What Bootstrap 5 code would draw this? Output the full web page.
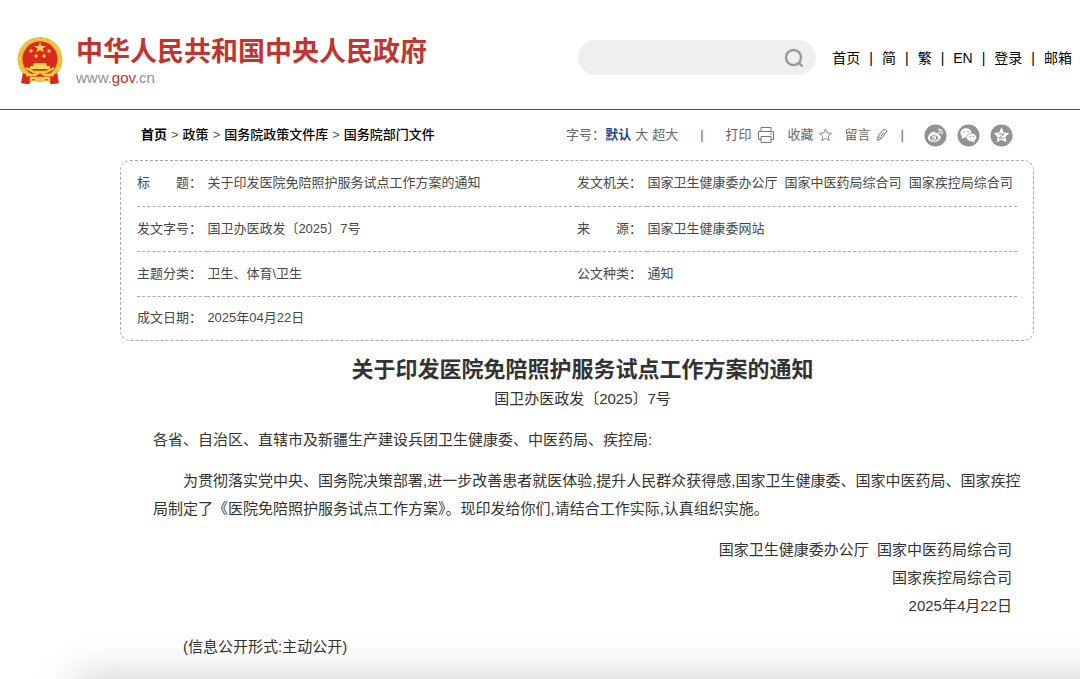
<!DOCTYPE html>
<html lang="zh-CN">
<head>
<meta charset="utf-8">
<meta name="viewport" content="width=device-width, initial-scale=1">
<title>关于印发医院免陪照护服务试点工作方案的通知</title>
<link href="https://cdn.jsdelivr.net/npm/bootstrap@5.3.0/dist/css/bootstrap.min.css" rel="stylesheet">
<style>
body{font-family:"Liberation Sans","Noto Sans CJK SC",sans-serif;font-size:13px;line-height:20px;color:#484848;background:#fff;overflow-x:hidden}
a{color:inherit;text-decoration:none}
.site-head{height:110px;padding:6px 8px 0 16px;border-bottom:1px solid #43508c}
.site-brand{padding-top:6px;gap:12px}
.site-name{font-size:27px;line-height:34px;font-weight:700;color:#c03530}
.site-url{font-size:15px;line-height:17px;color:#909090}
.site-url span{color:#c4302c}
.search-box{width:238px;height:35px;background:#efefef;padding:0 12px 0 16px}
.search-box input{background:transparent;border:0;outline:0;min-width:0}
.search-box button,.tool-btn{border:0;background:none;padding:0;color:inherit}
.top-links{font-size:14px;color:#000;gap:9px}
.page-body{padding:0 46px 0 120px}
.crumb-row{height:50px;padding:0 21px}
.crumbs{color:#000;gap:4px;font-weight:500}
.crumbs span{color:#555;font-weight:400}
.tools{color:#666}
.font-sizes{gap:4px;margin-right:22px}
.font-sizes .chosen{color:#134a97;font-weight:700;margin-left:-4px}
.tool-btn{display:flex;align-items:center;gap:5px}
.actions{margin:0 13px 0 22px;gap:13px}
.shares{margin-left:20px;gap:10px}
.meta-box{border:1px dashed #aaa;border-radius:10px;padding:0 16px}
.meta-table{width:100%;table-layout:fixed;border-collapse:collapse}
.meta-table th,.meta-table td{height:45px;padding:0;font-weight:400;border-bottom:1px dashed #aaa;white-space:nowrap}
.meta-table tr:last-child>*{border-bottom:0;height:44px}
.doc{padding:14px 22px 0 33px;font-size:15px;line-height:28px;color:#333}
.doc h1{font-size:22px;line-height:30px;font-weight:700;margin:0}
.doc p{margin-bottom:13px}
.doc .indent{text-indent:2em;margin-right:-12px}
.edge-shade{left:76px;right:-60px;bottom:-40px;height:40px;box-shadow:0 0 44px rgba(0,0,0,.22);pointer-events:none}
</style>
</head>
<body>
<header class="site-head d-flex align-items-center">
<a href="#" class="site-brand d-flex align-items-center">
<svg width="48" height="50" viewBox="0 0 48 50" aria-hidden="true">
<path d="M7 37L6 47l6 1 3-3h18l3 3 6-1-1-10z" fill="#cf281e"/>
<circle cx="24" cy="23.500" r="22.500" fill="#e5bb3a"/>
<circle cx="24" cy="23.500" r="20.500" fill="none" stroke="#edcb4c" stroke-width="2" stroke-dasharray="5 2"/>
<circle cx="24" cy="23" r="17.500" fill="#dc281d"/>
<g fill="#f8d748"><path d="M24 6l1.400 4H30l-3.500 2.600 1.300 4-3.800-2.500-3.800 2.500 1.300-4L18 10h4.600z"/><circle cx="15" cy="15" r="1.700"/><circle cx="33" cy="15" r="1.700"/><circle cx="20" cy="20" r="1.700"/><circle cx="28" cy="20" r="1.700"/>
<path d="M18 27h12l1 3h3v3H14v-3h3z"/></g>
<path d="M7 37c7 4 27 4 34 0l2 10-8 1-3-4H16l-3 4-8-1z" fill="#d9281d"/>
<path d="M10 32l8 4h12l8-4M10 39h9l5-3 5 3h9M15 46v-4h18v4M20 46v-3h8v3" fill="none" stroke="#f2cc42" stroke-width="2.500"/>
</svg>
<div><div class="site-name">中华人民共和国中央人民政府</div><div class="site-url">www.<span>gov</span>.cn</div></div>
</a>
<form class="search-box rounded-pill d-flex align-items-center ms-auto me-3"><input class="flex-grow-1" type="search" aria-label="搜索"><button class="d-flex" type="button" aria-label="搜索"><svg width="20" height="20" viewBox="0 0 20 20" fill="none" stroke="#999" stroke-width="2.400" stroke-linecap="round"><circle cx="9.500" cy="9.500" r="7.500"/><path d="M15 15l3 3"/></svg></button></form>
<nav class="top-links d-flex"><a href="#">首页</a><span>|</span><a href="#">简</a><span>|</span><a href="#">繁</a><span>|</span><a href="#">EN</a><span>|</span><a href="#">登录</a><span>|</span><a href="#">邮箱</a></nav>
</header>
<main class="page-body">
<div class="crumb-row d-flex align-items-center justify-content-between">
<nav class="crumbs d-flex" aria-label="当前位置"><a href="#" class="fw-bold">首页</a><span>&gt;</span><a href="#">政策</a><span>&gt;</span><a href="#">国务院政策文件库</a><span>&gt;</span><a href="#">国务院部门文件</a></nav>
<div class="tools d-flex align-items-center">
<div class="font-sizes d-flex"><span class="text-nowrap">字号：</span><button class="tool-btn chosen" type="button">默认</button><button class="tool-btn" type="button">大</button><button class="tool-btn" type="button">超大</button></div>
<span>|</span>
<div class="actions d-flex">
<button class="tool-btn" type="button">打印<svg width="18" height="18" viewBox="0 0 18 18" fill="none" stroke="#777"><path d="M4 5.500v-4h10v4M4 13.500H1.500v-8h15v8H14M4 10.500h10v6H4zM13 8h2"/></svg></button>
<button class="tool-btn" type="button">收藏<svg width="13" height="14" viewBox="0 0 13 14" fill="none" stroke="#888"><path d="M6.500 1l1.700 3.900 4.300.4-3.200 2.900.9 4.300-3.700-2.200-3.700 2.200.9-4.300L.500 5.300l4.300-.4z"/></svg></button>
<button class="tool-btn" type="button">留言<svg width="12" height="14" viewBox="0 0 12 14" fill="none" stroke="#777"><path d="M1.500 12.500l.5-4 5.500-7q2.300-.3 3.500 1.500l-5.500 7.500zM2 8.500l3.500 2M8 4.500l-3 4"/></svg></button>
</div>
<span>|</span>
<div class="shares d-flex">
<a href="#" aria-label="微博"><svg class="d-block" width="23" height="23" viewBox="0 0 23 23"><circle cx="11.500" cy="11.500" r="11" fill="#929292"/><path d="M4 14c0-3 4-7 6.500-6.500 1.200.3 1 1.500.8 2 2-.8 4-.5 3.500 1.500 2 .5 2.500 2 1.500 3.700C14.500 19 4 19 4 14z" fill="#fff"/><ellipse cx="10" cy="14" rx="4" ry="2.700" fill="#929292"/><ellipse cx="10" cy="14" rx="2.300" ry="1.900" fill="#fff"/><circle cx="9.500" cy="14.300" r="1" fill="#929292"/><path d="M14 5.500c3-.7 5.200 2 4 4.700M14.300 8c1.400-.2 2 .7 1.700 1.700" fill="none" stroke="#fff" stroke-width="1.200"/></svg></a>
<a href="#" aria-label="微信"><svg class="d-block" width="23" height="23" viewBox="0 0 23 23"><circle cx="11.500" cy="11.500" r="11" fill="#929292"/><ellipse cx="9" cy="9" rx="5.600" ry="4.700" fill="#fff"/><path d="M5 12l-.5 3 3-1.600z" fill="#fff"/><ellipse cx="14.500" cy="13.500" rx="5" ry="4.200" fill="#fff" stroke="#929292" stroke-width=".7"/><path d="M15 17.300l2.500 1.300-.3-2.200z" fill="#fff"/><g fill="#929292"><circle cx="7" cy="7.800" r=".8"/><circle cx="11" cy="7.800" r=".8"/><circle cx="13" cy="12.500" r=".7"/><circle cx="16.300" cy="12.500" r=".7"/></g></svg></a>
<a href="#" aria-label="QQ空间"><svg class="d-block" width="23" height="23" viewBox="0 0 23 23"><circle cx="11.500" cy="11.500" r="11" fill="#929292"/><path d="M11.500 3.500l2.400 5 5.300.6-3.800 3.800 1 5.400-4.900-2.600-4.900 2.600 1-5.400-3.800-3.800 5.300-.6z" fill="#fff"/><path d="M8.500 10h5.500l-5 4q3 .7 5.500 0" fill="none" stroke="#929292"/></svg></a>
</div>
</div>
</div>
<section class="meta-box">
<table class="meta-table">
<colgroup><col style="width:8%"><col style="width:42%"><col style="width:8%"><col style="width:42%"></colgroup>
<tr><th scope="row">标　　题：</th><td>关于印发医院免陪照护服务试点工作方案的通知</td><th scope="row">发文机关：</th><td>国家卫生健康委办公厅&nbsp; 国家中医药局综合司&nbsp; 国家疾控局综合司</td></tr>
<tr><th scope="row">发文字号：</th><td>国卫办医政发〔2025〕7号</td><th scope="row">来　　源：</th><td>国家卫生健康委网站</td></tr>
<tr><th scope="row">主题分类：</th><td>卫生、体育\卫生</td><th scope="row">公文种类：</th><td>通知</td></tr>
<tr><th scope="row">成文日期：</th><td colspan="3">2025年04月22日</td></tr>
</table>
</section>
<article class="doc">
<h1 class="text-center">关于印发医院免陪照护服务试点工作方案的通知</h1>
<p class="text-center">国卫办医政发〔2025〕7号</p>
<p>各省、自治区、直辖市及新疆生产建设兵团卫生健康委、中医药局、疾控局:</p>
<p class="indent">为贯彻落实党中央、国务院决策部署,进一步改善患者就医体验,提升人民群众获得感,国家卫生健康委、国家中医药局、国家疾控局制定了《医院免陪照护服务试点工作方案》。现印发给你们,请结合工作实际,认真组织实施。</p>
<p class="text-end">国家卫生健康委办公厅&nbsp; 国家中医药局综合司<br>国家疾控局综合司<br>2025年4月22日</p>
<p class="indent mb-0">(信息公开形式:主动公开)</p>
</article>
</main>
<div class="edge-shade position-fixed"></div>
<script src="https://cdn.jsdelivr.net/npm/bootstrap@5.3.0/dist/js/bootstrap.bundle.min.js"></script>
</body></html>
